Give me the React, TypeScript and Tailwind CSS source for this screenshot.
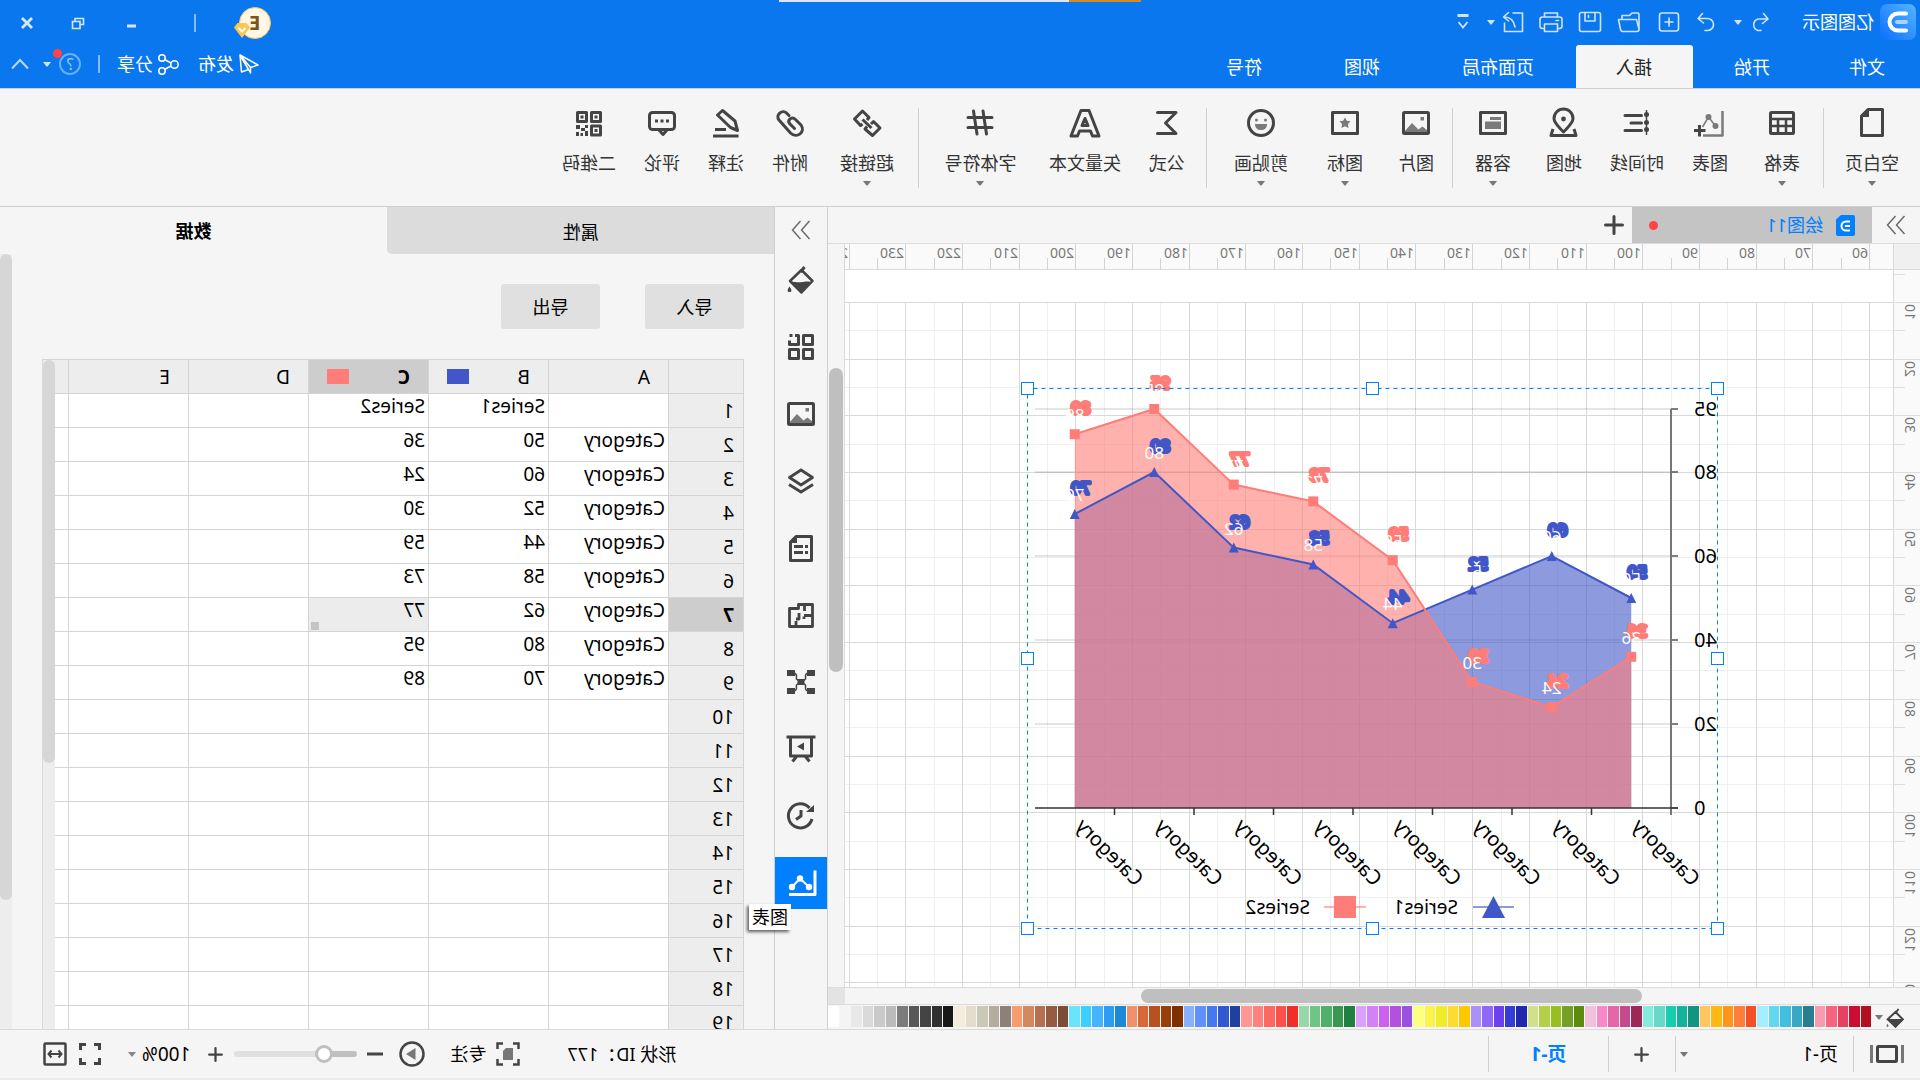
import React from 'react';

const RIBBON_GROUPS = [
  [{ label: '空白页', icon: 'page', width: 'w-24', menu: true }],
  [
    { label: '表格', icon: 'table', width: 'w-[82px]', menu: true },
    { label: '图表', icon: 'chart', width: 'w-[62px]' },
    { label: '时间线', icon: 'timeline', width: 'w-[84px]' },
    { label: '地图', icon: 'map', width: 'w-[62px]' },
    { label: '容器', icon: 'container', width: 'w-20', menu: true },
  ],
  [
    { label: '图片', icon: 'image', width: 'w-[72px]' },
    { label: '图标', icon: 'star', width: 'w-[70px]', menu: true },
    { label: '剪贴画', icon: 'smile', width: 'mr-[5px] w-[98px]', menu: true },
  ],
  [
    { label: '公式', icon: 'sigma', width: 'w-[78px]' },
    { label: '矢量文本', icon: 'letter', width: 'w-[86px]' },
    { label: '字体符号', icon: 'hash', width: 'w-[123px]', menu: true },
  ],
  [
    { label: '超链接', icon: 'link', width: 'w-[102px]', menu: true },
    { label: '附件', icon: 'clip', width: 'w-[52px]' },
    { label: '注释', icon: 'note', width: 'w-[76px]' },
    { label: '评论', icon: 'comment', width: 'w-[52px]' },
    { label: '二维码', icon: 'qr', width: 'w-[94px]' },
  ],
];

const RIBBON_ICONS: Record<string, React.ReactNode> = {
  page: (
    <>
      <path d="M5.5 2.5H20L26.5 9V28.5H5.5Z" />
      <path d="M19 2V10H27Z" fill="#444" stroke="none" />
    </>
  ),
  table: (
    <>
      <rect x="4.5" y="5.5" width="23" height="21" rx="1" />
      <path d="M4 12H28M4 19H28M12 12V26M20 12V26" strokeWidth="2.5" />
    </>
  ),
  chart: (
    <>
      <path d="M3.5 4V28.5H23" stroke="#7a7a7a" strokeWidth="2.5" />
      <path d="M10.5 19L17.5 10L23.5 20" stroke="#7a7a7a" strokeWidth="1.5" />
      <circle cx="17.5" cy="10" r="3" fill="#7a7a7a" stroke="none" />
      <circle cx="10.5" cy="19" r="3" fill="#7a7a7a" stroke="none" />
      <path d="M26.5 18V29.5M20.5 23.5H32" />
    </>
  ),
  timeline: (
    <>
      <path d="M6.5 3V28" strokeWidth="1.5" />
      <g fill="#444" stroke="none">
        <circle cx="6.5" cy="7.5" r="2.5" />
        <circle cx="6.5" cy="15.5" r="2.5" />
        <circle cx="6.5" cy="22.5" r="2.5" />
      </g>
      <path d="M11.5 8.5H28M11.5 16H22M11.5 23.5H28" strokeLinecap="round" />
    </>
  ),
  map: (
    <>
      <path d="M16.5 25C11 19 7 16 7 11.5A9.5 9.5 0 0 1 26 11.5C26 16 22 19 16.5 25Z" />
      <circle cx="16.5" cy="12" r="2.4" fill="#444" stroke="none" />
      <path d="M6 22L4 28.5H29L27 22" />
    </>
  ),
  container: (
    <>
      <rect x="3.5" y="5.5" width="25" height="21" />
      <path d="M8 10h11v3H8zM8 14.5h16v7.5H8z" fill="#7a7a7a" stroke="none" />
    </>
  ),
  image: (
    <>
      <path d="M4 24L9.5 19.5L13.5 22.5L20 16L28 25V26H4Z" fill="#7a7a7a" stroke="none" />
      <path d="M8 10h3.5v3.5H8z" fill="#7a7a7a" stroke="none" />
      <rect x="3.5" y="5.5" width="25" height="21" rx="1" />
    </>
  ),
  star: (
    <>
      <rect x="3.5" y="5.5" width="25" height="21" />
      <path
        d="M16 10.5L17.8 13.8L21.5 14.3L19 17L19.5 21L16 19.3L12.5 21L13 17L10.5 14.3L14.2 13.8Z"
        fill="#7a7a7a"
        stroke="none"
      />
    </>
  ),
  smile: (
    <>
      <circle cx="16" cy="16" r="12.5" />
      <circle cx="11.5" cy="13" r="1.5" fill="#7a7a7a" stroke="none" />
      <circle cx="20.5" cy="13" r="1.5" fill="#7a7a7a" stroke="none" />
      <path d="M10 17H22C22 21 19.5 23 16 23S10 21 10 17Z" fill="#7a7a7a" stroke="none" />
    </>
  ),
  sigma: <path d="M25.5 5.5H7L17.5 16L7 26.5H25.5" strokeLinecap="round" />,
  letter: <path d="M12 3.5H20L30 29H23.5L21.5 24H10.5L8.5 29H2L12 3.5ZM16 11.5L13 18.5H19Z" />,
  hash: <path d="M13 4L9.5 27M22.5 4L19 27M4 10.5H28M4 20.5H28" strokeLinecap="round" />,
  link: (
    <>
      <path d="M11.5 21L20.5 12.5" />
      <path d="M16 13L14 10.5L20.5 4L28.5 12L22.5 18.5L20.5 17" />
      <path d="M12 17L9.5 14.5L3 21L10.5 28.5L18 22L16 19.5" />
    </>
  ),
  clip: (
    <path
      d="M17 8.5L19.5 6C23.5 2 31 8 27 13L15.5 26C9 32 0 25 5 18L10.5 12.5C14 9 19 12.5 16.5 16.5L11.5 21.5"
      strokeLinecap="round"
    />
  ),
  note: (
    <>
      <path d="M4.5 23.5L7 14L19.5 3.5L24.5 8L11.5 20.5Z" />
      <path d="M16 22.5H27M3.5 29H29" />
    </>
  ),
  comment: (
    <>
      <rect x="3.5" y="5.5" width="25" height="17" rx="3" />
      <path d="M11 23L15 27.5L19 23" />
      <path d="M9 12.5h3v3H9zM14.5 12.5h3v3h-3zM20 12.5h3v3h-3z" fill="#444" stroke="none" />
    </>
  ),
  qr: (
    <>
      <path d="M4.5 5.5h9v9h-9zM18.5 5.5h9v9h-9zM4.5 19h9v9h-9z" />
      <path
        d="M7.5 8.5h3v3h-3zM21.5 8.5h3v3h-3zM7.5 22h3v3h-3zM17 18h3v3h-3zM20 21h4v3h-4zM25 18h4v4h-4zM17 24h3v5h-3zM22 26h2.5v3H22zM26 25h3v4h-3z"
        fill="#444"
        stroke="none"
      />
    </>
  ),
};

const SIDE_ICONS = [
  {
    name: '填充',
    art: (
      <>
        <path d="M15.5 6L27 17L15.5 28.5L4.5 17Z" strokeWidth="2.5" />
        <path d="M5 18C10 16 20 20 26.5 17L15.5 28.5Z" fill="#444" stroke="none" />
        <path d="M12.5 3L16.5 8" />
        <path d="M27.5 22.5C30 26 30 28 27.5 28S25 26 27.5 22.5Z" fill="#444" stroke="none" />
      </>
    ),
  },
  {
    name: '符号库',
    art: (
      <>
        <path d="M4.5 4.5h9v9h-9zM4.5 18.5h9v9h-9zM18.5 18.5h9v9h-9z" />
        <path d="M22 4.5H18.5V13.5H27.5V9.5M24.5 4.5H27.5" />
      </>
    ),
  },
  {
    name: '图片',
    art: (
      <>
        <path d="M4 24L9.5 19.5L13.5 22.5L20 16L28 25V26H4Z" fill="#7a7a7a" stroke="none" />
        <path d="M8 10h3.5v3.5H8z" fill="#7a7a7a" stroke="none" />
        <rect x="3.5" y="5.5" width="25" height="21" rx="1" />
      </>
    ),
  },
  {
    name: '图层',
    art: (
      <>
        <path d="M16 5L27.5 12.5L16 20L4.5 12.5Z" strokeWidth="2.8" />
        <path d="M4 19.5L16 27L28 19.5" strokeWidth="2.8" />
      </>
    ),
  },
  {
    name: '页面',
    art: (
      <>
        <path d="M5.5 4.5H21L26.5 10V28.5H5.5Z" />
        <path d="M9 14.5H12M9 20.5H12M14 14.5H23M14 20.5H23" />
        <path d="M20 3V11H28Z" fill="#444" stroke="none" />
      </>
    ),
  },
  {
    name: '平面图',
    art: <path d="M4.5 5.5H18.5V9.5H27.5V27.5H4.5ZM12.5 5V12M4.5 16.5H13M13 20V17.5M18 14V20H21M21 28V22" strokeWidth="2.8" />,
  },
  {
    name: '布局',
    art: (
      <>
        <path d="M8 7C13 7 11 11 11.5 13L15 16M24 7C19 7 21 11 20.5 13L17 16M8 25C13 25 11 21 11.5 19L15 16M24 25C19 25 21 21 20.5 19L17 16" strokeWidth="1.5" />
        <path d="M2 4h8v6H2zM22 4h8v6h-8zM2 22h8v6H2zM22 22h8v6h-8zM12.5 13h7v6h-7z" fill="#444" stroke="none" />
      </>
    ),
  },
  {
    name: '演示',
    art: (
      <>
        <path d="M1.5 4H30.5M5.5 4V23H26.5V4M12 23L7.5 28.5M20 23L24.5 28.5" />
        <path d="M13 9.5L20 13.5L13 17.5Z" fill="#444" stroke="none" />
      </>
    ),
  },
  {
    name: '历史',
    art: (
      <>
        <path d="M5 19A12 12 0 1 0 7.5 8" />
        <path d="M3 5V12H11Z" fill="#444" stroke="none" />
        <path d="M16 10V16L21 19.5" />
      </>
    ),
  },
  {
    name: '图表',
    active: true,
    art: (
      <g stroke="#fff">
        <path d="M2 3.5V27.5H28" />
        <path d="M8 20L17 11.5L25 20" strokeWidth="2" />
        <g fill="#fff" stroke="none">
          <circle cx="8" cy="20" r="3.2" />
          <circle cx="17" cy="11.5" r="3.2" />
          <circle cx="25" cy="20" r="3.2" />
        </g>
      </g>
    ),
  },
];

const PALETTE = [
  '#b01020', '#cc0c30', '#e84060', '#f56580', '#f99bb0',
  '#287e90', '#38a8c4', '#40c0de', '#60d8f0', '#a6eeff',
  '#f45028', '#ff7f38', '#ff961a', '#ffb814', '#ffc560',
  '#129480', '#14b49c', '#18ccb0', '#68d8c8', '#84ecdc',
  '#9a2858', '#c44a8c', '#e468a8', '#f888c8', '#f0c0dc',
  '#5e8a10', '#74a028', '#98be20', '#b4d04a', '#d0e08c',
  '#2028b0', '#343cd8', '#6c40f0', '#9068f8', '#ac90f8',
  '#fcc800', '#fcdc30', '#f0ec28', '#f8f44a', '#fcff80',
  '#9a50e0', '#b450e0', '#cc60f0', '#d480f8', '#dca0fc',
  '#208040', '#389850', '#50b068', '#70c488', '#98d8a8',
  '#f03028', '#fc5048', '#ff6860', '#ff807c', '#ff9894',
  '#2040a0', '#3058d0', '#4878f0', '#6090fc', '#88b0ff',
  '#803000', '#98400c', '#b85020', '#d86838', '#f0906c',
  '#1c88d8', '#2c9cf4', '#44b4ff', '#3cd0ff', '#68e4ff',
  '#7c4c34', '#945c44', '#b47050', '#d48860', '#f89c70',
  '#8c8078', '#b4ac9c', '#ccc8b8', '#e4dccc', '#f4ecdc',
  '#181818', '#303030', '#444444', '#585858', '#7c7c7c',
  '#bbbbbb', '#cacaca', '#dadada', '#e8e8e8', '#f4f4f4', '#ffffff',
];

const SERIES = [
  { name: 'Series1', color: '#4157c7', values: [50, 60, 52, 44, 58, 62, 80, 70] },
  { name: 'Series2', color: '#ff7d78', values: [36, 24, 30, 59, 73, 77, 95, 89] },
];

const COLUMNS = ['A', 'B', 'C', 'D', 'E', 'F'];

// 10mm on the ruler
const STEP = 56.69;

const Caret = ({ className = '' }: { className?: string }) => (
  <svg viewBox="0 0 8 5" className={`h-[5px] w-2 shrink-0 fill-current ${className}`}>
    <path d="M0 0H8L4.5 4.5H3.5Z" />
  </svg>
);

const Chevrons = () => (
  <svg viewBox="0 0 20 20" className="size-5" fill="none" stroke="#666" strokeWidth="1.4">
    <path d="M1.5 1L9.5 10L1.5 19M10.5 1L18.5 10L10.5 19" />
  </svg>
);

const Plus = ({ className }: { className: string }) => (
  <svg viewBox="0 0 20 20" className={className} stroke="#444" strokeWidth="3" strokeLinecap="round">
    <path d="M10 1.5V18.5M1.5 10H18.5" />
  </svg>
);

const QuickIcon = ({ label, className, children }: { label: string; className: string; children: React.ReactNode }) => (
  <button aria-label={label} className={className}>
    <svg viewBox="0 0 24 24" className="size-6" fill="none" stroke="#cfe4fc" strokeWidth="1.6" strokeLinecap="round" strokeLinejoin="round">
      {children}
    </svg>
  </button>
);

const TitleBar = () => (
  <header className="relative flex h-[89px] shrink-0 justify-between border-b border-[#c9d0d8] bg-[#0a77ee] text-white">
    <div className="absolute top-0 left-[779px] flex h-[2px] w-[362px]">
      <div className="w-[72px] bg-[#d08a28]" />
      <div className="flex-1 bg-[#dfe6f0]" />
    </div>

    <div className="flex flex-col">
      <div className="flex h-[46px] items-center pb-px pl-1">
        <svg viewBox="0 0 36 36" className="size-9">
          <defs>
            <linearGradient id="logo" x1="0" y1="0" x2="1" y2="1">
              <stop offset="0" stopColor="#55b4ff" />
              <stop offset="1" stopColor="#0a70ff" />
            </linearGradient>
          </defs>
          <rect width="36" height="36" rx="7" fill="url(#logo)" />
          <path d="M10 9.5H18A8.5 8.5 0 0 1 18 26.5H10" fill="none" stroke="#fff" strokeWidth="4" strokeLinecap="round" />
          <path d="M10 18H19" stroke="#a8d4ff" strokeWidth="4" strokeLinecap="round" />
        </svg>
        <span className="ml-1.5">亿图图示</span>

        <QuickIcon label="撤销" className="ml-[30px]">
          <path d="M8.5 3.5L4 9L9.5 13.5M4.5 9H14A6 6 0 0 1 14 20.5H11" />
        </QuickIcon>
        <Caret className="ml-[6px] text-[#cfe4fc]" />
        <QuickIcon label="重做" className="ml-4">
          <path d="M15.5 3.5L20 8.5L14.5 13M19.5 8.5H11A6 6 0 0 0 10 20.5H13" />
        </QuickIcon>
        <QuickIcon label="新建" className="ml-[13px]">
          <rect x="2.5" y="3" width="19" height="18" rx="2.5" />
          <path d="M12 8V16M8 12H16" />
        </QuickIcon>
        <QuickIcon label="打开" className="ml-4">
          <path d="M2 19V4.5C2 3.5 2.5 3 3.5 3H9L11.5 5.5H19V9M2 19L4.5 9.5H22.5L20.5 19.5C20 21 19.5 21.5 18.5 21.5H4C2.5 21.5 2 20.5 2 19" />
        </QuickIcon>
        <QuickIcon label="保存" className="ml-[15px]">
          <rect x="1.5" y="2.5" width="21" height="19" rx="2" />
          <path d="M7 3V11H17V3M13.5 5.5V7.5" />
        </QuickIcon>
        <QuickIcon label="打印" className="ml-[15px]">
          <path d="M5.5 7V3H18.5V7M5 18.5H3.5C2 18.5 1 17.5 1 16V9.5C1 8 2 7 3.5 7H20.5C22 7 23 8 23 9.5V16C23 17.5 22 18.5 20.5 18.5H19M5.5 14H18.5V21.5H5.5ZM4.5 10.5H7" />
        </QuickIcon>
        <QuickIcon label="导出" className="ml-[14px]">
          <path d="M12 3H2.5V21.5H20.5V13M16.5 2.5L21.5 7L16.5 11M21 7C15 7 11 11 10 17" />
        </QuickIcon>
        <Caret className="ml-[6px] text-[#cfe4fc]" />
        <svg viewBox="0 0 12 16" className="ml-[18px] h-4 w-3" fill="none" stroke="#cfe4fc" strokeWidth="1.8">
          <path d="M0.5 1.5H11.5" strokeWidth="3" />
          <path d="M1.5 8L6 13.5L10.5 8" />
        </svg>
      </div>

      <nav className="flex h-[43px]">
        <button className="pr-[38px] pl-[35px]">文件</button>
        <button className="px-[41px]">开始</button>
        <button className="rounded-t-[3px] bg-[#f5f5f5] pr-10 pl-[41px] text-[#222]">插入</button>
        <button className="pr-[41px] pl-[42px]">页面布局</button>
        <button className="px-[41px]">视图</button>
        <button className="px-[41px]">符号</button>
      </nav>
    </div>

    <div className="flex flex-col">
      <div className="flex h-[46px] items-center justify-end pr-[21px] pb-px">
        <div className="relative mr-[43px] flex size-8 items-center justify-center rounded-full border border-[#f0c860] bg-[#fff6e4] text-xl font-bold text-[#7a5420]">
          E
          <svg viewBox="0 0 16 15" className="absolute -right-[6px] bottom-0 h-[15px] w-4">
            <path d="M3.5 0H12.5L16 4.5L8 15L0 4.5Z" fill="#fcc850" />
            <path d="M4.5 5L8 8.5L11.5 5" fill="none" stroke="#fff" strokeWidth="1.8" />
          </svg>
        </div>
        <div className="mr-[57px] h-[18px] w-[2px] bg-[#84bbf6]" />
        <svg viewBox="0 0 116 14" className="h-[14px] w-[116px]" fill="none" stroke="#d4e7fc">
          <path d="M1 10H10" strokeWidth="3" />
          <path d="M57 8.5H53.5V2.5H62V6M57 12.5V5.5H64.5V12.5Z" strokeWidth="1.6" />
          <path d="M105 2L115 12M115 2L105 12" strokeWidth="2.8" />
        </svg>
      </div>

      <div className="flex h-9 items-center justify-end pr-[11px]">
        <button className="flex items-center gap-[5px]">
          <svg viewBox="0 0 20 20" className="size-5" fill="none" stroke="#fff" strokeWidth="1.5" strokeLinejoin="round">
            <path d="M1 11L19 1L17.5 18L10.5 15.5L8.5 19V13.5L1 11ZM8.5 13.5L19 1L10.5 15.5" />
          </svg>
          发布
        </button>
        <button className="ml-[19px] flex items-center gap-[5px]">
          <svg viewBox="0 0 21 21" className="size-[21px]" fill="none" stroke="#fff" strokeWidth="1.5">
            <circle cx="4.5" cy="10.5" r="3.7" />
            <circle cx="17" cy="4" r="3.2" />
            <circle cx="17" cy="17" r="3.2" />
            <path d="M8 9L14.5 5.5M8 12L14.5 15.5" />
          </svg>
          分享
        </button>
        <div className="mx-[17px] h-[18px] w-[2px] bg-[#84bbf6]" />
        <button className="relative flex size-[22px] items-center justify-center rounded-full border-2 border-[#6aaef6] text-base text-[#9bcbfa]">
          ?
          <span className="absolute -top-[6px] -right-[8px] size-[9px] rounded-full bg-[#ff4444]" />
        </button>
        <Caret className="ml-2 text-[#cfe4fc]" />
        <svg viewBox="0 0 18 12" className="ml-[14px] h-3 w-[18px]" fill="none" stroke="#b8d8fa" strokeWidth="2">
          <path d="M1 10.5L9 2L17 10.5" />
        </svg>
      </div>
    </div>
  </header>
);

const Ribbon = () => (
  <div className="flex h-[118px] shrink-0 border-b border-[#d0d0d0] text-[#333]">
    {RIBBON_GROUPS.map((group, g) => (
      <React.Fragment key={g}>
        {g > 0 && <div className="mt-[19px] h-20 w-px bg-[#cfcfcf]" />}
        {group.map((item) => (
          <button key={item.label} className={`flex flex-col items-center pt-[18px] ${item.width}`}>
            <svg viewBox="0 0 32 32" className="size-8" fill="none" stroke="#444" strokeWidth="3" strokeLinejoin="round">
              {RIBBON_ICONS[item.icon]}
            </svg>
            <span className="mt-3 leading-6 whitespace-nowrap">{item.label}</span>
            {item.menu && <Caret className="mt-[6px] text-[#777]" />}
          </button>
        ))}
      </React.Fragment>
    ))}
  </div>
);

const DocumentTabs = () => (
  <div className="flex h-[37px] shrink-0 items-center border-b border-[#dcdcdc]">
    <button aria-label="展开" className="flex w-12 justify-center">
      <Chevrons />
    </button>
    <div className="flex h-full w-60 items-center bg-[#c4c4c4] px-[17px] text-[#0080ff]">
      <svg viewBox="0 0 19 21" className="h-[21px] w-[19px]">
        <path d="M2 0H14L19 4.5V19Q19 21 17 21H2Q0 21 0 19V2Q0 0 2 0Z" fill="#0080ff" />
        <path d="M5 6.5H9A4.5 4.5 0 0 1 9 15.5H5M5 11H10" fill="none" stroke="#fff" strokeWidth="2" />
      </svg>
      <span className="ml-[13px] flex-1">绘图11</span>
      <span className="size-[9px] rounded-full bg-[#ff4444]" />
    </div>
    <button aria-label="新建标签" className="ml-2">
      <Plus className="size-5" />
    </button>
  </div>
);

const TopRuler = () => (
  <div className="flex h-[26px] shrink-0">
    <div className="w-[27px] border-r border-b border-[#d9d9d9] bg-[#f0f0f0]" />
    <svg className="h-[26px] min-w-0 flex-1 border-b border-[#d9d9d9] bg-[#fafafa]">
      {Array.from({ length: 19 }, (_, i) => {
        const x = Math.round(23 + i * STEP);
        const mid = Math.round(23 + (i + 0.5) * STEP);
        return (
          <g key={i}>
            <path d={`M${x + 0.5} 0V26M${mid + 0.5} 14V26`} stroke="#d4d4d4" />
            <text x={x + 2} y="14" fontSize="14" fill="#777">
              {60 + i * 10}
            </text>
          </g>
        );
      })}
    </svg>
    <div className="w-[17px] border-l border-[#d9d9d9]" />
  </div>
);

const LeftRuler = () => (
  <svg className="w-[27px] shrink-0 border-r border-[#d9d9d9] bg-[#fafafa]">
    {Array.from({ length: 13 }, (_, i) => {
      const y = Math.round(32 + i * STEP);
      const mid = Math.round(32 + (i - 0.5) * STEP);
      return (
        <g key={i}>
          <path d={`M0 ${y + 0.5}H26M15 ${mid + 0.5}H26`} stroke="#dedede" />
          <text transform={`translate(15 ${y + 2}) rotate(-90)`} textAnchor="end" fontSize="14" fill="#777">
            {10 + i * 10}
          </text>
        </g>
      );
    })}
  </svg>
);

const pointX = (i: number) => 47 + 79.5 * (i + 0.5);
const pointY = (v: number) => 420 - v * 4.2;

const AreaChart = () => (
  <svg className="absolute top-[118px] left-[175px] h-[541px] w-[691px] overflow-visible">
    {/* value axis */}
    {[0, 20, 40, 60, 80, 95].map((v) => (
      <g key={v}>
        {v > 0 && <path d={`M47 ${pointY(v)}H683`} stroke="#000" strokeOpacity="0.1" strokeWidth="2" />}
        <path d={`M40 ${pointY(v)}H47`} stroke="#555" strokeWidth="1.5" />
        <text x="24" y={pointY(v) + 7} textAnchor="end" fontSize="20">
          {v}
        </text>
      </g>
    ))}

    {SERIES.map((s) => (
      <path
        key={s.name}
        d={`M${pointX(0)} 420${s.values.map((v, i) => `L${pointX(i)} ${pointY(v)}`).join('')}L${pointX(7)} 420Z`}
        fill={s.color}
        fillOpacity="0.6"
      />
    ))}

    <path d="M47 21V427" stroke="#777" strokeWidth="2" />
    <path d="M40 420H683" stroke="#333" strokeWidth="1.5" />
    {SERIES[0].values.map((_, i) => (
      <g key={i}>
        {i > 0 && <path d={`M${47 + 79.5 * i} 420V427`} stroke="#333" strokeWidth="1.5" />}
        <text transform={`translate(${pointX(i)} 439) rotate(-45)`} textAnchor="end" fontSize="20">
          Category
        </text>
      </g>
    ))}

    {SERIES.map((s, n) => (
      <g key={s.name}>
        <polyline
          points={s.values.map((v, i) => `${pointX(i)},${pointY(v)}`).join(' ')}
          fill="none"
          stroke={s.color}
          strokeWidth="2"
        />
        {s.values.map((v, i) =>
          n === 0 ? (
            <path key={i} d={`M${pointX(i)} ${pointY(v) - 5}l5 10h-10z`} fill={s.color} />
          ) : (
            <rect key={i} x={pointX(i) - 5} y={pointY(v) - 5} width="10" height="10" fill={s.color} />
          )
        )}
      </g>
    ))}

    {/* value labels: thick halo with the figure over it */}
    {SERIES.map((s) =>
      s.values.map((v, i) => (
        <g key={`${s.name}-${i}`} fontSize="17" textAnchor="middle">
          <text x={pointX(i) - 6} y={pointY(v) - 20} fill={s.color} stroke={s.color} strokeWidth="4" strokeLinejoin="round">
            {v}
          </text>
          <text x={pointX(i)} y={pointY(v) - 13} fill="#fff">
            {v}
          </text>
        </g>
      ))
    )}

    {/* legend */}
    <path d="M204 519H245" stroke="#4157c7" strokeOpacity="0.6" strokeWidth="2" />
    <path d="M224.5 508L236 530H213Z" fill="#4157c7" />
    <text x="260" y="526" fontSize="19">Series1</text>
    <path d="M352 519H394" stroke="#ff7d78" strokeOpacity="0.6" strokeWidth="2" />
    <rect x="362" y="508" width="22" height="22" fill="#ff7d78" />
    <text x="408" y="526" fontSize="19">Series2</text>

    {/* selection */}
    <rect x="0.5" y="0.5" width="690" height="540" fill="none" stroke="#0080ff" strokeDasharray="4 4" />
    {[0, 345, 690].map((x) =>
      [0, 270, 540].map((y) =>
        x === 345 && y === 270 ? null : (
          <rect key={`${x}-${y}`} x={x - 5.5} y={y - 5.5} width="12" height="12" fill="#fff" stroke="#0080ff" />
        )
      )
    )}
  </svg>
);

const Canvas = () => (
  <div className="relative min-w-0 flex-1 overflow-hidden bg-white">
    <svg className="absolute inset-0 h-full w-full">
      {Array.from({ length: 60 }, (_, i) => (
        <path key={i} d={`M${Math.round(23 + (i + 0.5) * STEP) + 0.5} 32V2000`} stroke="#efefef" />
      ))}
      {Array.from({ length: 40 }, (_, i) => (
        <path key={i} d={`M0 ${Math.round(32 + (i + 0.5) * STEP) + 0.5}H4000`} stroke="#efefef" />
      ))}
      {Array.from({ length: 60 }, (_, i) => (
        <path key={i} d={`M${Math.round(23 + i * STEP) + 0.5} 32V2000`} stroke="#d9d9d9" />
      ))}
      {Array.from({ length: 40 }, (_, i) => (
        <path key={i} d={`M0 ${Math.round(32 + i * STEP) + 0.5}H4000`} stroke="#d9d9d9" />
      ))}
    </svg>
    <AreaChart />
  </div>
);

const Palette = () => (
  <div className="flex h-[25px] shrink-0 border-t border-[#dcdcdc] pt-px">
    <button aria-label="填充颜色" className="flex w-[49px] items-center gap-[3px] pl-4 text-[#777]">
      <svg viewBox="0 0 18 20" className="h-5 w-[18px]" fill="none" stroke="#444" strokeWidth="2">
        <path d="M8.5 4L16 11L8.5 18.5L1.5 11Z" />
        <path d="M2 12H15.5L8.5 18.5Z" fill="#444" />
        <path d="M5.5 1L8.5 5" />
        <path d="M16.5 15.5q2 3 0 3.5q-2-.5 0-3.5" fill="#777" stroke="none" />
      </svg>
      <Caret />
    </button>
    <div className="flex h-[21px] flex-1 gap-px">
      {PALETTE.map((color, i) => (
        <div key={i} className="flex-1" style={{ background: color }} />
      ))}
    </div>
  </div>
);

const Drawing = () => (
  <section className="flex min-w-0 flex-1 flex-col">
    <DocumentTabs />
    <TopRuler />
    <div className="flex min-h-0 flex-1">
      <LeftRuler />
      <Canvas />
      <div className="w-[17px] border-l border-[#dcdcdc] px-px pt-[98px]">
        <div className="h-[304px] rounded-full bg-[#bfbfbf]" />
      </div>
    </div>
    <div className="flex h-[17px] shrink-0 border-t border-[#dcdcdc]">
      <div className="flex-1 py-px pl-[278px]">
        <div className="h-[14px] w-[501px] rounded-full bg-[#bfbfbf]" />
      </div>
      <div className="w-[17px] bg-[#e3e3e3]" />
    </div>
    <Palette />
  </section>
);

const SideToolbar = () => (
  <aside className="flex w-[54px] shrink-0 flex-col border-x border-[#cfcfcf]">
    <button aria-label="收起" className="flex h-[47px] shrink-0 items-center justify-center pb-0.5">
      <Chevrons />
    </button>
    <div className="flex flex-col gap-[15px]">
      {SIDE_ICONS.map((item) => (
        <button
          key={item.name}
          aria-label={item.name}
          className={`relative flex h-[52px] items-center justify-center ${item.active ? 'bg-[#0080ff]' : ''}`}
        >
          <svg viewBox="0 0 32 32" className="size-8" fill="none" stroke="#444" strokeWidth="3" strokeLinejoin="round">
            {item.art}
          </svg>
          {item.active && (
            <span className="absolute top-[47px] left-9 z-10 bg-white px-[3px] leading-[26px] whitespace-nowrap text-black shadow-[2px_2px_3px_rgba(0,0,0,0.6)]">
              {item.name}
            </span>
          )}
        </button>
      ))}
    </div>
  </aside>
);

const Sheet = () => {
  const rows = Array.from({ length: 19 }, (_, r) => {
    if (r === 0) return ['', 'Series1', 'Series2'];
    if (r > 8) return [];
    return ['Category', SERIES[0].values[r - 1], SERIES[1].values[r - 1]];
  });

  return (
    <div className="mt-[30px] flex min-h-0 flex-1 border-t border-l border-[#d4d4d4]">
      <div className="min-w-0 flex-1 overflow-hidden">
        <table className="w-[795px] table-fixed border-separate border-spacing-0 bg-white text-left text-[19px] text-black">
          <thead>
            <tr className="h-[34px]">
              <th className="w-[75px] border-r border-b border-[#d4d4d4] bg-[#ededed]" />
              {COLUMNS.map((c, i) => (
                <th
                  key={c}
                  className={`w-[120px] border-r border-b border-[#d4d4d4] p-0 ${
                    c === 'C' ? 'bg-[#cdcdcd] font-bold' : 'bg-[#ededed] font-normal'
                  }`}
                >
                  <div className="flex items-center justify-between px-[18px]">
                    {c}
                    {(i === 1 || i === 2) && (
                      <span className={`h-[15px] w-[22px] ${i === 1 ? 'bg-[#4157c7]' : 'bg-[#ff7d78]'}`} />
                    )}
                  </div>
                </th>
              ))}
            </tr>
          </thead>
          <tbody>
            {rows.map((row, r) => (
              <tr key={r} className="h-[34px]">
                <th
                  className={`border-r border-b border-[#d4d4d4] py-0 pr-0 pl-[9px] ${
                    r === 6 ? 'bg-[#cdcdcd] font-bold' : 'bg-[#ededed] font-normal'
                  }`}
                >
                  {r + 1}
                </th>
                {COLUMNS.map((c, i) => (
                  <td
                    key={c}
                    className={`relative border-r border-b border-[#d4d4d4] py-0 pr-0 pl-[3px] align-top leading-6 ${
                      r === 6 && i === 2 ? 'bg-[#ececec]' : ''
                    }`}
                  >
                    {row[i]}
                    {r === 6 && i === 2 && <span className="absolute right-[2px] bottom-px size-2 bg-[#c4c4c4]" />}
                  </td>
                ))}
              </tr>
            ))}
          </tbody>
        </table>
      </div>
      <div className="w-[13px] shrink-0 border-r border-[#d9d9d9] bg-[#ededed]">
        <div className="h-[403px] rounded-full bg-[#d6d6d6]" />
      </div>
    </div>
  );
};

const DataPanel = () => (
  <aside className="flex w-[774px] shrink-0 flex-col text-black">
    <div className="flex h-[47px] shrink-0">
      <button className="flex-1 rounded-br-[5px] bg-[#dcdcdc] pt-0.5">属性</button>
      <button className="flex-1 font-bold">数据</button>
    </div>
    <div className="flex min-h-0 flex-1">
      <div className="flex min-w-0 flex-1 flex-col px-[30px] pt-[30px]">
        <div className="flex shrink-0 gap-[45px]">
          <button className="h-[45px] w-[99px] rounded-[3px] bg-[#e0e0e0]">导入</button>
          <button className="h-[45px] w-[99px] rounded-[3px] bg-[#e0e0e0]">导出</button>
        </div>
        <Sheet />
      </div>
      <div className="w-3 bg-[#ededed]">
        <div className="h-[646px] rounded-full bg-[#d6d6d6]" />
      </div>
    </div>
  </aside>
);

const StatusBar = () => (
  <footer className="flex h-[51px] shrink-0 items-center border-t border-b-2 border-t-[#d9d9d9] border-b-[#ebebeb] text-black">
    <svg viewBox="0 0 34 18" className="mr-4 ml-4 h-[18px] w-[34px]" fill="none" stroke="#444">
      <rect x="7.5" y="1.5" width="19" height="15" rx="1" strokeWidth="3" />
      <path d="M1.5 0V18M32.5 0V18" stroke="#777" strokeWidth="3" />
    </svg>
    <div className="h-9 w-px bg-[#cfcfcf]" />
    <label className="relative flex w-[177px] items-center">
      <select aria-label="页面" className="w-full appearance-none bg-transparent pl-[15px] text-[19px] outline-none">
        <option>页-1</option>
      </select>
      <Caret className="pointer-events-none absolute right-1 text-[#777]" />
    </label>
    <div className="h-9 w-px bg-[#cfcfcf]" />
    <button aria-label="添加页面" className="flex w-[66px] justify-center">
      <Plus className="size-[15px]" />
    </button>
    <div className="h-9 w-px bg-[#cfcfcf]" />
    <button className="w-[119px] text-[19px] font-bold text-[#0080ff]">页-1</button>
    <div className="h-9 w-px bg-[#cfcfcf]" />

    <div className="ml-auto flex items-center pr-[43px]">
      <span className="mr-[47px]">形状 ID：177</span>
      <button className="flex items-center gap-[10px]">
        <svg viewBox="0 0 24 24" className="size-6" fill="none" stroke="#444" strokeWidth="2.5">
          <path d="M1.5 7V1.5H7M17 1.5H22.5V7M22.5 17V22.5H17M7 22.5H1.5V17" />
          <path d="M7 6H14L17 9V18H7Z" fill="#777" stroke="none" />
        </svg>
        专注
      </button>
      <button aria-label="播放" className="ml-[25px]">
        <svg viewBox="0 0 26 26" className="size-[26px]" fill="none">
          <circle cx="13" cy="13" r="11.5" stroke="#444" strokeWidth="2.5" />
          <path d="M9.5 7L19 13L9.5 19Z" fill="#777" />
        </svg>
      </button>
      <button aria-label="缩小" className="ml-4">
        <svg viewBox="0 0 16 4" className="h-1 w-4">
          <path d="M0 2H16" stroke="#444" strokeWidth="3" />
        </svg>
      </button>
      <input
        type="range"
        aria-label="缩放"
        defaultValue={23}
        className="ml-[10px] h-[6px] w-[123px] appearance-none rounded-full bg-[linear-gradient(to_right,#c0c0c0_27%,#e0e0e0_27%)] [&::-webkit-slider-thumb]:size-[18px] [&::-webkit-slider-thumb]:appearance-none [&::-webkit-slider-thumb]:rounded-full [&::-webkit-slider-thumb]:border-[3px] [&::-webkit-slider-thumb]:border-[#c0c0c0] [&::-webkit-slider-thumb]:bg-white"
      />
      <button aria-label="放大" className="ml-[11px]">
        <Plus className="size-[15px]" />
      </button>
      <button className="ml-[18px] flex items-center gap-[6px] text-[19px]">
        100%
        <Caret className="text-[#888]" />
      </button>
      <svg viewBox="0 0 22 22" className="ml-[27px] size-[22px]" fill="none" stroke="#444" strokeWidth="3">
        <path d="M1.5 7V1.5H7M15 1.5H20.5V7M20.5 15V20.5H15M7 20.5H1.5V15" />
      </svg>
      <svg viewBox="0 0 24 24" className="ml-3 size-6" fill="none" stroke="#444">
        <rect x="1.5" y="1.5" width="21" height="21" rx="1" strokeWidth="2.5" />
        <path d="M6 12H18M8.5 8.5L5.5 12L8.5 15.5M15.5 8.5L18.5 12L15.5 15.5" strokeWidth="2" />
      </svg>
    </div>
  </footer>
);

const App: React.FC = () => {
  return (
    <div className="flex h-screen w-full -scale-x-100 flex-col overflow-hidden bg-[#f5f5f5] font-['Noto_Sans','Noto_Sans_CJK_SC',sans-serif] text-lg leading-6">
      <TitleBar />
      <Ribbon />
      <main className="flex min-h-0 flex-1">
        <Drawing />
        <SideToolbar />
        <DataPanel />
      </main>
      <StatusBar />
    </div>
  );
};

export default App;
